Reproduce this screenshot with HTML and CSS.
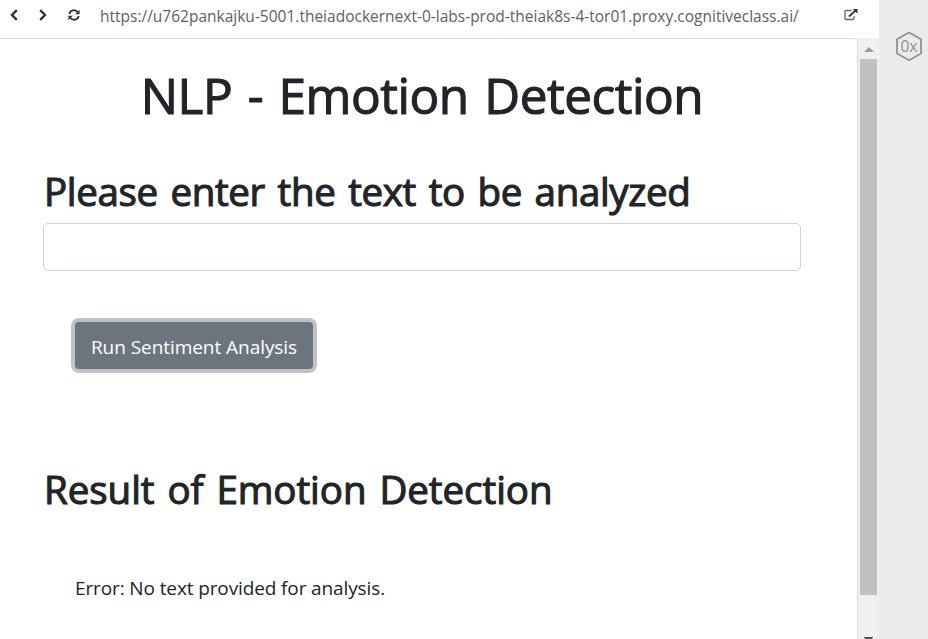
FILE: index.html
```
<!DOCTYPE html>
<html lang="en">
<head>
<meta charset="utf-8">
<title>Emotion Detection</title>
<link rel="stylesheet" href="styles.css">
</head>
<body>
<div class="browser">
  <header class="toolbar">
    <svg class="icon back" viewBox="0 0 10 12"><path d="M7.8 1.2 3 6l4.800 4.800"/></svg>
    <svg class="icon forward" viewBox="0 0 10 12"><path d="M2.200 1.200 7 6l-4.800 4.800"/></svg>
    <svg class="icon reload" viewBox="0 0 12 12"><path class="arc" d="M1.300 5A4.700 4.700 0 0 1 9.500 3M10.700 7A4.700 4.700 0 0 1 2.500 9"/><path class="head" d="M11.600.8v4.400H7.200zM.4 11.200V6.800h4.400z"/></svg>
    <span class="url">https://u762pankajku-5001.theiadockernext-0-labs-prod-theiak8s-4-tor01.proxy.cognitiveclass.ai/</span>
    <svg class="icon external" viewBox="0 0 14 12"><path class="box" d="M7.500 1.500H2.200Q1 1.500 1 2.700v6.600q0 1.200 1.200 1.200h6.600q1.200 0 1.200-1.200V7"/><path class="arrow" d="M5 7.500 11.500 1.500"/><path class="head" d="M8.800 0H13.500v4.700z"/></svg>
  </header>
  <div class="viewport">
    <main class="page">
      <h1>NLP - Emotion Detection</h1>
      <h2 class="prompt">Please enter the text to be analyzed</h2>
      <input class="field" type="text" aria-label="Text to be analyzed">
      <button class="run" type="button">Run Sentiment Analysis</button>
      <h2 class="result">Result of Emotion Detection</h2>
      <p class="message">Error: No text provided for analysis.</p>
    </main>
    <div class="scrollbar">
      <svg class="up" viewBox="0 0 10 5"><path d="M0 5 5 0l5 5z"/></svg>
      <div class="thumb"></div>
      <svg class="down" viewBox="0 0 9 2"><path d="M0 0h9v1H8v1H1V1H0z"/></svg>
    </div>
  </div>
</div>
<aside class="rail">
  <svg class="badge" viewBox="0 0 28 31"><path d="M14 1.500 26 8.300v14.200L14 29.300 2 22.500V8.300z"/><text x="5.500" y="20.500" textLength="17" lengthAdjust="spacingAndGlyphs">0x</text></svg>
</aside>
</body>
</html>
```
FILE: styles.css
```
* { box-sizing: border-box; }
body {
  margin: 0;
  width: 928px;
  height: 639px;
  display: flex;
  overflow: hidden;
  background: #fff;
  color: #212529;
  font-family: "Open Sans", "Noto Sans", sans-serif;
}
.browser { width: 879px; display: flex; flex-direction: column; }
.toolbar {
  height: 38px;
  flex: none;
  display: flex;
  align-items: flex-start;
  padding: 0 21px 0 9px;
}
.icon { flex: none; fill: none; stroke: #333; }
.back, .forward { width: 10px; height: 12px; margin-top: 9px; stroke-width: 2.400; }
.forward { margin-left: 19px; }
.reload { width: 12px; height: 12px; margin: 9px 0 0 20px; }
.arc { stroke-width: 1.800; }
.head { fill: #333; stroke: none; }
.external { width: 14px; height: 12px; margin: 9px 0 0 auto; }
.box { stroke: #666; stroke-width: 1.300; }
.arrow { stroke-width: 1.800; }
.url {
  margin: 5px 0 0 20px;
  color: #616161;
  font-size: 15.500px;
  line-height: 22px;
  white-space: nowrap;
}
.viewport { flex: 1; display: flex; min-height: 0; background: #f0f0f0; }
.page {
  width: 858px;
  padding: 26px 56px 0 43px;
  background: #fff;
  border: solid #ddd;
  border-width: 1px 1px 0 0;
  border-top-right-radius: 5px;
}
h1, h2, p { margin: 0; white-space: nowrap; }
h1, h2 { font-weight: 400; -webkit-text-stroke: 1.100px #212529; }
h1 { text-align: center; font-size: 49.500px; line-height: 60px; letter-spacing: -.45px; word-spacing: 3px; }
h2 { padding-left: 1px; font-size: 38.500px; line-height: 48px; word-spacing: 3px; }
.prompt { margin-top: 42px; letter-spacing: -.35px; }
.field {
  display: block;
  width: 758px;
  height: 48px;
  margin-top: 8px;
  border: 1px solid #ced4da;
  border-radius: 5px;
  background: #fff;
}
.run {
  display: block;
  width: 238px;
  height: 47px;
  margin: 51px 0 0 32px;
  padding: 3px 0 0;
  border: 0;
  border-radius: 4px;
  background: #6c757d;
  box-shadow: 0 0 0 4px #c0c3c6;
  color: #fff;
  font: 19px/44px "Open Sans", sans-serif;
  letter-spacing: -.05px;
}
.result { margin-top: 96px; letter-spacing: -.05px; }
.message { margin: 61px 0 0 32px; font-size: 19px; line-height: 28px; letter-spacing: -.12px; }
.scrollbar { width: 21px; padding-left: 2px; display: flex; flex-direction: column; }
.up { width: 10px; height: 5px; margin: 9px 0 0 4px; fill: #999; }
.thumb { width: 17px; height: 536px; margin-top: 7px; background: #c1c1c1; }
.down { width: 9px; height: 2px; margin: 42px 0 0 4px; fill: #505050; }
.rail { flex: 1; padding: 31px 0 0 16px; background: #ebebeb; }
.badge { display: block; width: 28px; height: 31px; }
.badge path { fill: none; stroke: #929292; stroke-width: 1.800; }
.badge text { fill: #929292; font-size: 15.500px; }
```
